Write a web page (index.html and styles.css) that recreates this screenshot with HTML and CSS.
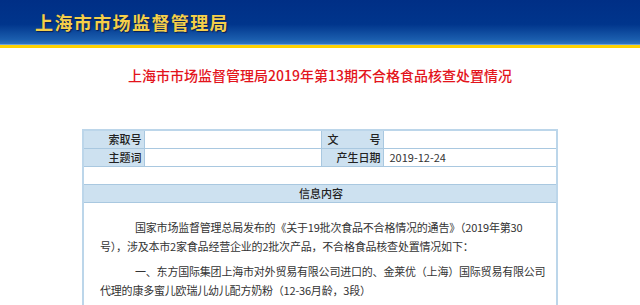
FILE: index.html
```html
<!DOCTYPE html>
<html lang="zh-CN">
<head>
  <meta charset="UTF-8">
  <title>上海市市场监督管理局</title>
  <link rel="stylesheet" href="styles.css">
</head>
<body>
  <div class="banner">
    <div class="banner-title">上海市市场监督管理局</div>
  </div>

  <h1 class="doc-title">上海市市场监督管理局2019年第13期不合格食品核查处置情况</h1>

  <table class="info-table">
    <colgroup>
      <col class="c-label">
      <col class="c-value">
      <col class="c-label2">
      <col>
    </colgroup>
    <tr>
      <td class="label">索取号</td>
      <td></td>
      <td class="label spread">文 号</td>
      <td></td>
    </tr>
    <tr>
      <td class="label">主题词</td>
      <td></td>
      <td class="label">产生日期</td>
      <td class="date">2019-12-24</td>
    </tr>
    <tr class="blank">
      <td colspan="4"></td>
    </tr>
    <tr>
      <td class="label center" colspan="4">信息内容</td>
    </tr>
    <tr>
      <td class="content" colspan="4">
        <p>国家市场监督管理总局发布的《关于19批次食品不合格情况的通告》（2019年第30<br>号），涉及本市2家食品经营企业的2批次产品，不合格食品核查处置情况如下：</p>
        <p>一、东方国际集团上海市对外贸易有限公司进口的、金莱优（上海）国际贸易有限公司<br>代理的康多蜜儿欧瑞儿幼儿配方奶粉（12-36月龄，3段）</p>
      </td>
    </tr>
  </table>
</body>
</html>
```

FILE: styles.css
```css
body {
  margin: 0;
  background: #fff;
  font-family: "Noto Sans CJK SC", "DejaVu Sans", sans-serif;
  color: #333;
}

.banner {
  height: 44px;
  background: linear-gradient(to bottom, #002f86 0%, #00358c 55%, #1b5eae 90%, #2f74c0 100%);
  border-bottom: 1px solid #6fa2d8;
  box-shadow: 0 3px 0 #ffd200;
  margin-bottom: 3px;
}

.banner-title {
  padding-left: 35px;
  line-height: 44px;
  font-size: 18px;
  font-weight: bold;
  letter-spacing: 1.4px;
  color: #f4cf4a;
  text-shadow: 1px 1px 1px #0b1f4f;
}

.doc-title {
  margin: 20px 0 0;
  text-align: center;
  font-size: 14px;
  line-height: 20px;
  font-weight: 500;
  color: #e3141c;
}

.info-table {
  width: 476px;
  margin: 44px auto 0;
  table-layout: fixed;
  border-collapse: collapse;
  border: 2px solid #bcd6ea;
  font-size: 11px;
}

.c-label {
  width: 61px;
}

.c-value {
  width: 177px;
}

.c-label2 {
  width: 62px;
}

.info-table td {
  height: 17px;
  padding: 0 4px;
  border: 1px solid #a9c8e0;
  line-height: 17px;
}

.info-table .label {
  background: #cde1f0;
  text-align: right;
  color: #222;
  font-weight: 500;
  padding-right: 2px;
}

.info-table .spread {
  text-align: justify;
  text-align-last: justify;
  padding-left: 6px;
}

.info-table .center {
  text-align: center;
}

.info-table .date {
  padding-left: 6px;
}

.info-table .content {
  padding: 15px 16px 20px;
  color: #333;
  vertical-align: top;
}

.content p {
  margin: 0 0 7px;
  line-height: 18.5px;
  text-indent: 35px;
  letter-spacing: -0.2px;
  white-space: nowrap;
}
```
